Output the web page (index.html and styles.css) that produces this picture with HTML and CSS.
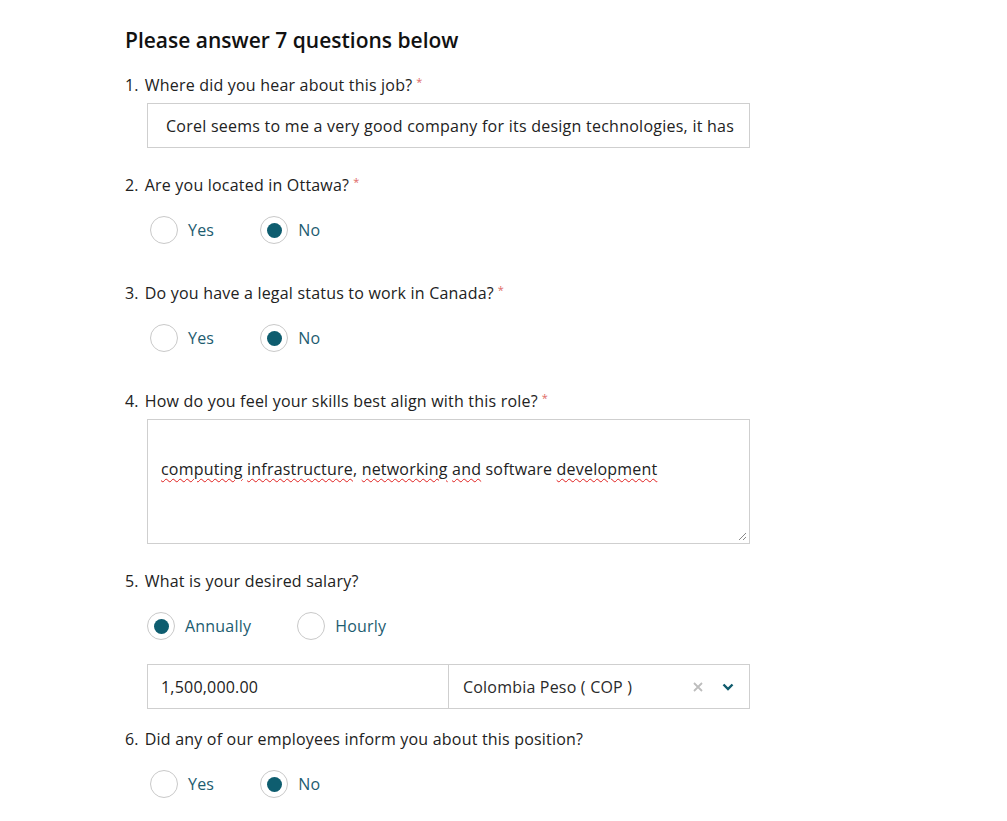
FILE: index.html
```html
<!DOCTYPE html>
<html lang="en">
<head>
<meta charset="utf-8">
<title>Questions</title>
<link rel="stylesheet" href="styles.css">
</head>
<body>
<main class="form">
  <h2 class="title">Please answer 7 questions below</h2>

  <section class="q q-text">
    <div class="label"><span class="num">1.</span>Where did you hear about this job?<span class="req">*</span></div>
    <div class="input input-scrolled">Corel seems to me a very good company for its design technologies, it has</div>
  </section>

  <section class="q q-radio">
    <div class="label"><span class="num">2.</span>Are you located in Ottawa?<span class="req">*</span></div>
    <div class="radios radios-inset">
      <label class="opt"><span class="radio"></span>Yes</label>
      <label class="opt"><span class="radio checked"></span>No</label>
    </div>
  </section>

  <section class="q q-radio">
    <div class="label"><span class="num">3.</span>Do you have a legal status to work in Canada?<span class="req">*</span></div>
    <div class="radios radios-inset">
      <label class="opt"><span class="radio"></span>Yes</label>
      <label class="opt"><span class="radio checked"></span>No</label>
    </div>
  </section>

  <section class="q q-text">
    <div class="label"><span class="num">4.</span>How do you feel your skills best align with this role?<span class="req">*</span></div>
    <div class="textarea">
      <p><span class="sp">computing</span> <span class="sp">infrastructure</span>, <span class="sp">networking</span> <span class="sp">and</span> software <span class="sp">development</span></p>
      <svg class="grip" width="10" height="10" viewBox="0 0 10 10"><path d="M9 2 L2 9 M9 6 L6 9" stroke="#888" stroke-width="1"/></svg>
    </div>
  </section>

  <section class="q q-salary">
    <div class="label"><span class="num">5.</span>What is your desired salary?</div>
    <div class="radios">
      <label class="opt"><span class="radio checked"></span>Annually</label>
      <label class="opt"><span class="radio"></span>Hourly</label>
    </div>
    <div class="salary">
      <div class="amount">1,500,000.00</div>
      <div class="currency">
        <span class="cur-text">Colombia Peso ( COP )</span>
        <svg class="clear" width="10" height="10" viewBox="0 0 10 10"><path d="M1 1 L9 9 M9 1 L1 9" stroke="#bdbdbd" stroke-width="1.8"/></svg>
        <svg class="chev" width="12" height="8" viewBox="0 0 12 8"><path d="M1.5 1.5 L6 6 L10.5 1.5" fill="none" stroke="#0f5b6d" stroke-width="2.4"/></svg>
      </div>
    </div>
  </section>

  <section class="q q-radio">
    <div class="label"><span class="num">6.</span>Did any of our employees inform you about this position?</div>
    <div class="radios radios-inset">
      <label class="opt"><span class="radio"></span>Yes</label>
      <label class="opt"><span class="radio checked"></span>No</label>
    </div>
  </section>
</main>
</body>
</html>
```

FILE: styles.css
```css
* { box-sizing: border-box; }
html, body { margin: 0; background: #fff; }
body {
  font-family: "Open Sans", Lato, sans-serif;
  color: #222;
  font-size: 16px;
  letter-spacing: 0.2px;
}
.form {
  padding: 26px 0 0 125px;
  width: 750px;
  display: flex;
  flex-direction: column;
}
.title {
  margin: 0 0 20px;
  font-size: 21px;
  line-height: 28px;
  font-weight: 600;
  color: #111;
  letter-spacing: 0;
}
.q { display: flex; flex-direction: column; }
.label {
  line-height: 22px;
  font-size: 16px;
  color: #222;
}
.num { margin-right: 6px; }
.req { color: #e06a66; font-size: 11px; margin-left: 4px; vertical-align: top; line-height: 16px; }

.q-text { margin-bottom: 26px; }
.q-text .label { margin-bottom: 7px; }
.q-radio { margin-bottom: 38px; }
.q-radio .label { margin-bottom: 20px; }
.q-salary .label { margin-bottom: 20px; }
.q-salary { margin-bottom: 19px; }

.input {
  margin-left: 22px;
  height: 45px;
  border: 1px solid #cfcfcf;
  padding: 0 12px 0 18px;
  display: flex;
  align-items: center;
  white-space: nowrap;
  overflow: hidden;
  font-size: 16px;
  letter-spacing: 0.25px;
  color: #222;
}
.textarea {
  position: relative;
  margin-left: 22px;
  height: 125px;
  border: 1px solid #cfcfcf;
  padding: 38px 13px 0;
  font-size: 16px;
  line-height: 22px;
}
.textarea p { margin: 0; }
.sp { text-decoration: underline wavy #e0201e; text-decoration-thickness: 1px; text-underline-offset: 3px; }
.grip { position: absolute; right: 2px; bottom: 2px; }

.radios {
  display: flex;
  gap: 46px;
  margin-left: 22px;
  height: 28px;
  align-items: center;
}
.radios-inset { margin-left: 25px; }
.opt {
  display: flex;
  align-items: center;
  gap: 10px;
  color: #1d5c70;
  font-size: 16px;
}
.radio {
  width: 28px;
  height: 28px;
  border: 1px solid #c9c9c9;
  border-radius: 50%;
  display: flex;
  align-items: center;
  justify-content: center;
  background: #fff;
}
.radio.checked::after {
  content: "";
  width: 15px;
  height: 15px;
  border-radius: 50%;
  background: #0e5d6f;
}

.salary {
  margin: 24px 0 0 22px;
  height: 45px;
  border: 1px solid #cfcfcf;
  display: flex;
  font-size: 16px;
}
.amount {
  width: 301px;
  border-right: 1px solid #cfcfcf;
  display: flex;
  align-items: center;
  padding-left: 13px;
}
.currency {
  flex: 1;
  display: flex;
  align-items: center;
  padding: 0 15px 0 14px;
}
.cur-text { flex: 1; color: #2a2a2a; }
.clear { margin-right: 19px; }
```
